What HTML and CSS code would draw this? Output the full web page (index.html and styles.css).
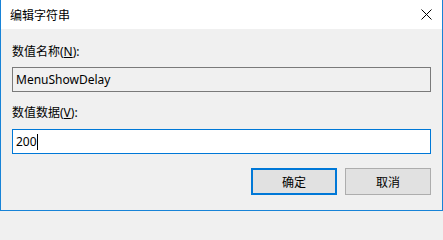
FILE: index.html
```html
<!DOCTYPE html>
<html lang="zh-CN">
<head>
<meta charset="utf-8">
<title>编辑字符串</title>
<link rel="stylesheet" href="styles.css">
</head>
<body>
<div class="dialog">
  <div class="titlebar">
    <span class="title">编辑字符串</span>
    <span class="close">
      <svg width="11" height="11" viewBox="0 0 11 11"><path d="M0.5 0.5L10.5 10.5M10.5 0.5L0.5 10.5" stroke="#000" stroke-width="1" fill="none"/></svg>
    </span>
  </div>
  <div class="content">
    <div class="label">数值名称(<u>N</u>):</div>
    <div class="field readonly">MenuShowDelay</div>
    <div class="label second">数值数据(<u>V</u>):</div>
    <div class="field active">200<span class="caret"></span></div>
    <div class="buttons">
      <div class="btn default">确定</div>
      <div class="btn">取消</div>
    </div>
  </div>
</div>
</body>
</html>
```

FILE: styles.css
```css
html, body {
  margin: 0;
  padding: 0;
  background: #f0f0f0;
}
body {
  font-family: "Noto Sans", "Noto Sans CJK SC", sans-serif;
  font-size: 12px;
  color: #000;
}
.dialog {
  width: 443px;
  height: 211px;
  box-sizing: border-box;
  border: 1px solid #1883d7;
  border-top: none;
  background: #f0f0f0;
  display: flex;
  flex-direction: column;
}
.titlebar {
  height: 29px;
  background: #fff;
  display: flex;
  align-items: center;
  justify-content: space-between;
  padding: 0 10px 0 9px;
}
.title {
  line-height: 16px;
  font-family: "Noto Sans CJK SC", sans-serif;
}
.close {
  display: flex;
  align-items: center;
  margin-right: 0;
}
.close svg {
  display: block;
}
.content {
  display: flex;
  flex-direction: column;
  padding: 15px 11px 0 11px;
}
.label {
  height: 16px;
  line-height: 16px;
  margin-bottom: 7px;
}
.label.second {
  margin-top: 13px;
  margin-bottom: 8px;
}
.field {
  height: 25px;
  box-sizing: border-box;
  border: 1px solid #7a7a7a;
  padding: 0 3px;
  display: flex;
  align-items: center;
  line-height: 16px;
}
.field.readonly {
  background: #f0f0f0;
}
.field.active {
  background: #fff;
  border-color: #0078d7;
}
.caret {
  display: inline-block;
  width: 1px;
  height: 16px;
  background: #000;
  margin-left: 0;
}
.buttons {
  display: flex;
  justify-content: flex-end;
  gap: 8px;
  margin-top: 14px;
}
.btn {
  width: 86px;
  height: 27px;
  box-sizing: border-box;
  border: 1px solid #adadad;
  background: #e1e1e1;
  display: flex;
  align-items: center;
  justify-content: center;
  font-family: "Noto Sans CJK SC", sans-serif;
}
.btn.default {
  border: 2px solid #0078d7;
}
```
